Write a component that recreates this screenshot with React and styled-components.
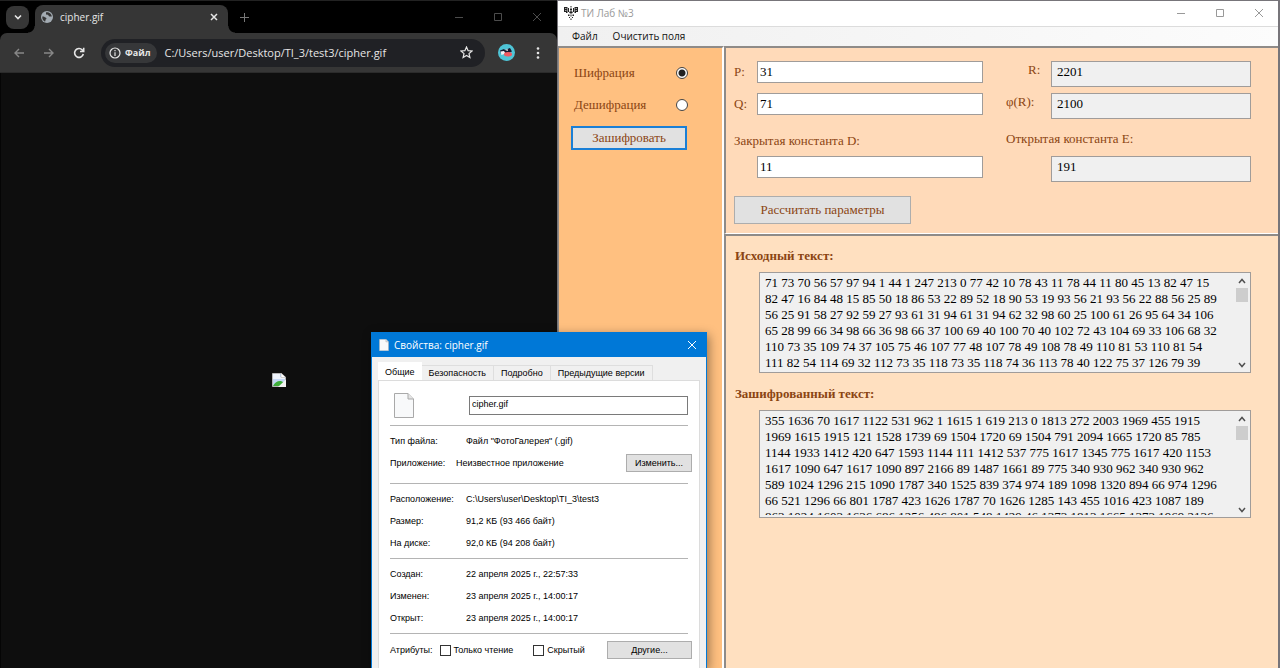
import React from "react";
import styled, { createGlobalStyle, css } from "styled-components";

const serif = `"Liberation Serif", "Times New Roman", serif`;
const sans = `"Liberation Sans", Arial, sans-serif`;
const ui = `"Open Sans", "Noto Sans", sans-serif`;

const GlobalStyle = createGlobalStyle`
  *, *::before, *::after { box-sizing: border-box; }
  body { margin: 0; background: #000; overflow: hidden; }
  button, input, textarea { margin: 0; font: inherit; color: inherit; }
`;

const Desktop = styled.div`
  position: relative;
  display: grid;
  grid-template-columns: 557fr 723fr;
  min-height: 100vh;
  overflow: hidden;
`;

/* ---------- browser ---------- */

const Browser = styled.section`
  display: flex;
  flex-direction: column;
  min-width: 0;
  background: #000;
  border-top: 1px solid #222;
  font-family: ${ui};
  color: #e6e6e6;
`;

const TabStrip = styled.div`
  display: flex;
  align-items: center;
  height: 32px;
  padding-left: 6px;
`;

const TabSearch = styled.button`
  display: grid;
  place-items: center;
  width: 23px;
  height: 23px;
  padding: 0;
  border: 0;
  border-radius: 8px;
  background: #363636;
`;

const BrowserTab = styled.div`
  position: relative;
  display: flex;
  align-items: center;
  align-self: flex-end;
  width: 193px;
  height: 28px;
  margin-left: 6px;
  padding: 0 8px 4px 6px;
  gap: 7px;
  border-radius: 8px 8px 0 0;
  background: #363636;
  font-size: 10px;
  span { flex: 1; }
  &::before, &::after {
    content: "";
    position: absolute;
    bottom: 0;
    width: 7px;
    height: 7px;
  }
  &::before {
    left: -7px;
    background: radial-gradient(circle at 0 0, transparent 6px, #363636 7px);
  }
  &::after {
    right: -7px;
    background: radial-gradient(circle at 100% 0, transparent 6px, #363636 7px);
  }
`;

const IconButton = styled.button`
  display: grid;
  place-items: center;
  width: ${(p) => p.$size || 14}px;
  height: ${(p) => p.$size || 14}px;
  padding: 0;
  border: 0;
  background: none;
  flex: none;
`;

const WindowButtons = styled.div`
  display: flex;
  gap: 24px;
  margin-left: auto;
  padding-right: ${(p) => p.$end}px;
  color: ${(p) => p.$tone};
`;

const Toolbar = styled.div`
  display: flex;
  align-items: center;
  height: 40px;
  padding: 0 12px;
  gap: 16px;
  background: #363636;
  border-radius: 7px 7px 0 0;
  border-bottom: 1px solid #2b2b2b;
`;

const Omnibox = styled.div`
  display: flex;
  align-items: center;
  flex: 1;
  min-width: 0;
  height: 28px;
  margin: 0 -3px 0 -1px;
  padding: 0 12px 0 4px;
  gap: 7px;
  border-radius: 14px;
  background: #202125;
  font-size: 11px;
`;

const SchemeChip = styled.button`
  display: flex;
  align-items: center;
  height: 20px;
  padding: 0 7px 0 4px;
  gap: 4px;
  border: 0;
  border-radius: 10px;
  background: #363739;
  font-size: 9px;
  font-weight: 700;
`;

const Address = styled.input`
  flex: 1;
  min-width: 0;
  padding: 0;
  border: 0;
  outline: 0;
  background: none;
`;

const Viewport = styled.div`
  display: grid;
  place-items: center;
  flex: 1;
  background: #0e0e0e;
  border-left: 1px solid #050505;
  svg { margin-top: 18px; }
`;

/* ---------- cipher application ---------- */

const AppWindow = styled.section`
  display: flex;
  flex-direction: column;
  min-width: 0;
  border: 1px solid #77757a;
  border-right-width: 2px;
  border-bottom: 0;
  background: #fff;
  font-family: ${serif};
  font-size: 13px;
  color: #8b4513;
`;

const TitleBar = styled.header`
  display: flex;
  align-items: center;
  height: 25px;
  padding: 0 0 1px 6px;
  gap: 3px;
  font-family: ${ui};
  font-size: 10px;
  color: #999;
`;

const MenuBar = styled.nav`
  display: flex;
  height: 20px;
  padding-left: 14px;
  gap: 15px;
  border-top: 1px solid #dcdcdc;
  background: linear-gradient(90deg, #f0f0f0, #fcfcfc);
  font-family: ${ui};
  font-size: 10px;
  color: #111;
`;

const MenuItem = styled.button`
  padding: 0 0 2px;
  border: 0;
  background: none;
  line-height: 16px;
`;

const Workspace = styled.div`
  display: grid;
  grid-template-columns: 166px 1fr;
  flex: 1;
`;

const sunken = css`
  border-style: solid;
  border-width: 2px 2px 2px 1px;
  border-color: #8f8b88 #fff #fff #8f8b88;
`;

const ModePanel = styled.form`
  ${sunken}
  border-bottom-width: 0;
  padding: 15px 35px 0 12px;
  background: #ffc080;
`;

const ModeOption = styled.label`
  display: flex;
  align-items: center;
  justify-content: space-between;
  height: 20px;
  margin-bottom: 12px;
  padding: 0 0 0 3px;
  &:last-of-type { margin-bottom: 11px; }
`;

const Radio = styled.input`
  appearance: none;
  width: 12px;
  height: 12px;
  margin: 0 -1px 0 0;
  border: 1px solid #444;
  border-radius: 50%;
  background: #fff;
  &:checked { background: radial-gradient(circle, #222 3px, #fff 4px); }
`;

const ActionButton = styled.button`
  width: ${(p) => p.$width || "100%"};
  height: ${(p) => (p.$primary ? 24 : 28)}px;
  padding: 0;
  border: ${(p) => (p.$primary ? "2px solid #1a7fd6" : "1px solid #adadad")};
  background: #e1e1e1;
`;

const RightSide = styled.div`
  display: flex;
  flex-direction: column;
  min-width: 0;
`;

const ParamsPanel = styled.form`
  ${sunken}
  border-left-width: 2px;
  border-right-width: 0;
  border-bottom-width: 1px;
  display: grid;
  grid-template-columns: 249fr 245fr;
  column-gap: 23px;
  padding: 13px 27px 9px 8px;
  background: #ffdab9;
`;

const ParamGroup = styled.div`
  display: grid;
  grid-template-columns: ${(p) => p.$label}px 1fr;
  grid-template-rows: 32px 32px 31px 40px;
  align-items: start;
  line-height: ${(p) => p.$line}px;
`;

const ParamLabel = styled.label`
  padding-left: ${(p) => p.$indent || 0}px;
`;

const ConstantLabel = styled.label`
  grid-column: 1 / -1;
  padding-top: 5px;
`;

const Field = styled.input`
  grid-column: 2;
  width: 100%;
  height: ${(p) => (p.readOnly ? 26 : 22)}px;
  padding: ${(p) => (p.readOnly ? "0 5px 5px" : "0 2px 1px")};
  border: 1px solid #a09c9a;
  border-radius: 0;
  background: ${(p) => (p.readOnly ? "#f0f0f0" : "#fff")};
  color: #000;
`;

const TextPanel = styled.div`
  ${sunken}
  border-left-width: 2px;
  border-right-width: 0;
  border-bottom-width: 0;
  flex: 1;
  padding: 10px 27px 0 9px;
  background: #ffe0c0;
`;

const TextHeading = styled.label`
  display: block;
  height: 20px;
  line-height: 20px;
  margin-bottom: 6px;
  font-weight: 700;
`;

const TextFrame = styled.div`
  display: flex;
  height: ${(p) => p.$height}px;
  margin: 0 0 11px 24px;
  border: 1px solid #a09c9a;
  background: #f0f0f0;
`;

const Output = styled.textarea`
  flex: 1;
  min-width: 0;
  margin: 2px 0;
  padding: 0 0 0 5px;
  border: 0;
  outline: 0;
  resize: none;
  overflow: hidden;
  white-space: pre;
  background: none;
  line-height: 16px;
  color: #000;
`;

const ScrollTrack = styled.div`
  display: grid;
  grid-template-rows: 15px 14px 1fr 15px;
  place-items: center;
  width: 15px;
  padding-right: 1px;
  > :last-child { grid-row: 4; }
`;

const ScrollThumb = styled.div`
  width: 12px;
  height: 14px;
  background: #cdcdcd;
`;

/* ---------- properties dialog ---------- */

const Dialog = styled.section`
  position: absolute;
  left: 371px;
  top: 332px;
  bottom: 0;
  display: flex;
  flex-direction: column;
  width: 336px;
  border: 1px solid #0078d7;
  border-bottom: 0;
  background: #f0f0f0;
  box-shadow: 2px 3px 10px rgba(0, 0, 0, 0.4);
  font-family: ${sans};
  font-size: 9px;
  color: #000;
`;

const DialogTitle = styled.header`
  display: flex;
  align-items: center;
  flex: none;
  height: 24px;
  padding: 0 8px 0 7px;
  gap: 5px;
  background: #0078d7;
  font-family: ${ui};
  font-size: 10px;
  color: #fff;
  span { flex: 1; }
`;

const DialogTabs = styled.div`
  display: flex;
  align-items: flex-end;
  height: 23px;
  padding: 0 6px;
`;

const DialogTab = styled.button`
  height: ${(p) => (p.$active ? 18 : 15)}px;
  padding: 0 ${(p) => (p.$active ? 6 : 7)}px;
  border: 1px solid ${(p) => (p.$active ? "#fff" : "#dedede")};
  border-bottom: 0;
  border-left-width: ${(p) => (p.$active ? 1 : 0)}px;
  background: ${(p) => (p.$active ? "#fff" : "#f0f0f0")};
`;

const DialogPage = styled.form`
  flex: 1;
  margin: 0 6px;
  padding: 11px 11px 0;
  border: 1px solid #dcdcdc;
  border-bottom: 0;
  background: #fff;
`;

const FileHead = styled.div`
  display: flex;
  align-items: center;
  justify-content: space-between;
  height: 33px;
  padding: 0 0 6px 4px;
`;

const FileName = styled.input`
  width: 219px;
  height: 19px;
  padding: 0 2px 3px;
  border: 1px solid #7a7a7a;
  border-radius: 0;
`;

const Section = styled.dl`
  margin: 0;
  padding: 4px 0 ${(p) => p.$end || 4}px;
  border-top: 1px solid #b4b4b4;
`;

const PropertyRow = styled.div`
  display: grid;
  grid-template-columns: ${(p) => p.$label || 76}px 1fr auto;
  align-items: center;
  height: 22px;
  margin-right: -4px;
  dt, dd { margin: 0; white-space: nowrap; }
`;

const SmallButton = styled.button`
  width: ${(p) => p.$width}px;
  height: 18px;
  padding: 0;
  border: 1px solid #adadad;
  background: #e1e1e1;
`;

const AttributesSection = styled.div`
  border-top: 1px solid #b4b4b4;
`;

const Attributes = styled.div`
  display: flex;
  align-items: center;
  height: 32px;
  margin-right: -4px;
  gap: 7px;
  button { margin-left: auto; }
`;

const CheckLabel = styled.label`
  display: flex;
  align-items: center;
  gap: 3px;
  margin-right: 13px;
`;

const Check = styled.input`
  appearance: none;
  width: 11px;
  height: 11px;
  border: 1px solid #333;
  background: #fff;
`;

/* ---------- drawings ---------- */

const Stroke = ({ d, size = 10, width = 1, box = size, ...rest }) => (
  <svg width={size} height={size} viewBox={`0 0 ${box} ${box}`} fill="none" stroke="currentColor" strokeWidth={width} aria-hidden="true" {...rest}>
    <path d={d} />
  </svg>
);

const CaptionButtons = ({ tone, end }) => (
  <WindowButtons $tone={tone} $end={end}>
    <IconButton $size={15} aria-label="Свернуть"><Stroke d="M1 5.5H9" /></IconButton>
    <IconButton $size={15} aria-label="Развернуть"><Stroke d="M1.5 1.5H8.500V8.500H1.500Z" /></IconButton>
    <IconButton $size={15} aria-label="Закрыть"><Stroke d="M1 1L9 9M9 1L1 9" /></IconButton>
  </WindowButtons>
);

const Globe = () => (
  <svg width="12" height="12" viewBox="0 0 12 12" aria-hidden="true">
    <circle cx="6" cy="6" r="6" fill="#a3abb2" />
    <path d="M1.300 5.500C3 5.500 3.500 6 4.500 6.500C6 7.200 5.500 8.200 4.600 8.600C4.600 9.500 4.300 10.200 4 10.700C2.200 9.800 1 8 1.300 5.500ZM5 1.300C5.200 2.700 4.700 3 5.300 3.600C6.200 4 7.400 3.600 7.600 4.700C7.800 5.800 9.500 5.400 10.800 5.600C10.700 3.300 8.400 1 5 1.300Z" fill="#363636" />
  </svg>
);

const Avatar = () => (
  <svg width="17" height="17" viewBox="0 0 17 17" aria-hidden="true">
    <circle cx="8.500" cy="8.500" r="8.500" fill="#4fc4d6" />
    <path d="M2 6.500L6 5L7 6L12 4L14 7.500L9 9.500L3 10Z" fill="#171a30" />
    <path d="M2.500 7.500L6 7L7.500 9.500L3.500 11Z" fill="#f3f3f6" />
    <path d="M7 6L9.500 5L10 7Z" fill="#fff" />
    <ellipse cx="10" cy="10.200" rx="4" ry="2.200" fill="#ef5b62" />
  </svg>
);

const BrokenImage = () => (
  <svg width="14" height="14" viewBox="0 0 14 14" role="img" aria-label="cipher.gif">
    <path d="M0.500 0.500H9L13.500 4.500V13.500H0.500Z" fill="#c4d7f5" stroke="#b5b5b5" />
    <path d="M1 1H8V4H13V6H1Z" fill="#eef3fb" />
    <path d="M9 0L14 4.500H9Z" fill="#fff" stroke="#aaa" strokeWidth=".5" />
    <path d="M1 13C3 9 6 7.500 9 8L13 10V13Z" fill="#3fae3a" />
    <path d="M6 14L14 6.500V14Z" fill="#f3f3f3" />
  </svg>
);

const AppEmblem = () => (
  <svg width="14" height="14" viewBox="0 0 14 14" aria-hidden="true" fill="#222">
    <path d="M0 1H3.500V7H2V6H0ZM4 2H5V6H4ZM9 2H10V6H9ZM10.500 1H14V6H12V7H10.500Z" />
    <path d="M6.500 0H7.500V1.500H6.500ZM6 2.500H8V4.500H6ZM5 6L7 5L9 6L8 7.500H6ZM4 8.500H5.500V10H4ZM8.500 8.500H10V10H8.500ZM6.500 8.500H7.500V10.500H6.500ZM5 11H6V12H5ZM8 11H9V12H8ZM6.500 12.500H7.500V14H6.500Z" />
    <path d="M1 2.500H2.500M1 4.500H2.500M11.500 2.500H13M11.500 4.500H13" stroke="#fff" strokeWidth=".6" />
  </svg>
);

const Page = ({ w, h }) => (
  <svg width={w} height={h} viewBox="0 0 20 25" aria-hidden="true">
    <path d="M0.500 0.500H14L19.500 6V24.500H0.500Z" fill="#f8f9fa" stroke="#a9a9a9" />
    <path d="M14 0.500V6H19.500" fill="#e4e4e4" stroke="#a9a9a9" />
  </svg>
);

/* ---------- content ---------- */

const sourceText = `71 73 70 56 57 97 94 1 44 1 247 213 0 77 42 10 78 43 11 78 44 11 80 45 13 82 47 15
82 47 16 84 48 15 85 50 18 86 53 22 89 52 18 90 53 19 93 56 21 93 56 22 88 56 25 89
56 25 91 58 27 92 59 27 93 61 31 94 61 31 94 62 32 98 60 25 100 61 26 95 64 34 106
65 28 99 66 34 98 66 36 98 66 37 100 69 40 100 70 40 102 72 43 104 69 33 106 68 32
110 73 35 109 74 37 105 75 46 107 77 48 107 78 49 108 78 49 110 81 53 110 81 54
111 82 54 114 69 32 112 73 35 118 73 35 118 74 36 113 78 40 122 75 37 126 79 39`;

const cipherText = `355 1636 70 1617 1122 531 962 1 1615 1 619 213 0 1813 272 2003 1969 455 1915
1969 1615 1915 121 1528 1739 69 1504 1720 69 1504 791 2094 1665 1720 85 785
1144 1933 1412 420 647 1593 1144 111 1412 537 775 1617 1345 775 1617 420 1153
1617 1090 647 1617 1090 897 2166 89 1487 1661 89 775 340 930 962 340 930 962
589 1024 1296 215 1090 1787 340 1525 839 374 974 189 1098 1320 894 66 974 1296
66 521 1296 66 801 1787 423 1626 1787 70 1626 1285 143 455 1016 423 1087 189
863 1024 1603 1636 686 1256 486 801 548 1429 46 1373 1813 1665 1373 1969 2136`;

const OutputBox = ({ id, title, text, height }) => (
  <>
    <TextHeading htmlFor={id}>{title}</TextHeading>
    <TextFrame $height={height}>
      <Output id={id} readOnly wrap="off" value={text} />
      <ScrollTrack>
        <Stroke size={8} width={1.5} d="M1 6L4 2.500L7 6" color="#505050" />
        <ScrollThumb />
        <Stroke size={8} width={1.5} d="M1 2L4 5.500L7 2" color="#505050" />
      </ScrollTrack>
    </TextFrame>
  </>
);

const Property = ({ name, value, label, children }) => (
  <PropertyRow $label={label}>
    <dt>{name}</dt>
    <dd>{value}</dd>
    {children && <dd>{children}</dd>}
  </PropertyRow>
);

export default function App() {
  return (
    <Desktop>
      <GlobalStyle />
      <Browser>
        <TabStrip>
          <TabSearch aria-label="Поиск вкладок"><Stroke size={8} width={1.6} d="M1 2.500L4 5.500L7 2.500" /></TabSearch>
          <BrowserTab>
            <Globe />
            <span>cipher.gif</span>
            <IconButton $size={12} aria-label="Закрыть вкладку"><Stroke size={8} width={1.5} d="M1 1L7 7M7 1L1 7" /></IconButton>
          </BrowserTab>
          <IconButton $size={32} aria-label="Новая вкладка"><Stroke size={9} width={1} d="M4.500 0V9M0 4.500H9" color="#777" /></IconButton>
          <CaptionButtons tone="#4c4c4c" end={13} />
        </TabStrip>
        <Toolbar>
          <IconButton aria-label="Назад"><Stroke size={10} width={1.400} d="M10 5H1M5 1L1 5L5 9" color="#888" /></IconButton>
          <IconButton aria-label="Вперёд"><Stroke size={10} width={1.400} d="M0 5H9M5 1L9 5L5 9" color="#888" /></IconButton>
          <IconButton aria-label="Обновить"><Stroke size={12} width={1.600} d="M10.300 7A4.400 4.400 0 1 1 9.300 3L10.500 4.300M10.700 0.800V4.500H7" /></IconButton>
          <Omnibox>
            <SchemeChip>
              <svg width="12" height="12" viewBox="0 0 12 12" fill="none" stroke="currentColor" strokeWidth="1.200" aria-hidden="true">
                <circle cx="6" cy="6" r="5" />
                <path d="M6 5.300V9M6 3V4.300" />
              </svg>
              Файл
            </SchemeChip>
            <Address aria-label="Адрес" defaultValue="C:/Users/user/Desktop/TI_3/test3/cipher.gif" />
            <IconButton aria-label="В закладки"><Stroke size={13} width={1.200} d="M6.500 1L8.100 4.700L12 5L9 7.600L9.900 11.500L6.500 9.400L3.100 11.500L4 7.600L1 5L4.900 4.700Z" /></IconButton>
          </Omnibox>
          <IconButton $size={17} aria-label="Профиль"><Avatar /></IconButton>
          <IconButton aria-label="Меню">
            <svg width="4" height="12" viewBox="0 0 4 12" fill="currentColor" aria-hidden="true">
              <circle cx="2" cy="1.500" r="1.300" /><circle cx="2" cy="6" r="1.300" /><circle cx="2" cy="10.500" r="1.300" />
            </svg>
          </IconButton>
        </Toolbar>
        <Viewport><BrokenImage /></Viewport>
      </Browser>

      <AppWindow>
        <TitleBar>
          <AppEmblem />
          ТИ Лаб №3
          <CaptionButtons tone="#999" end={12} />
        </TitleBar>
        <MenuBar>
          <MenuItem>Файл</MenuItem>
          <MenuItem>Очистить поля</MenuItem>
        </MenuBar>
        <Workspace>
          <ModePanel>
            <ModeOption>Шифрация<Radio type="radio" name="mode" defaultChecked /></ModeOption>
            <ModeOption>Дешифрация<Radio type="radio" name="mode" /></ModeOption>
            <ActionButton type="button" $primary>Зашифровать</ActionButton>
          </ModePanel>
          <RightSide>
            <ParamsPanel>
              <ParamGroup $label={23} $line={22}>
                <ParamLabel htmlFor="p">P:</ParamLabel>
                <Field id="p" defaultValue="31" />
                <ParamLabel htmlFor="q">Q:</ParamLabel>
                <Field id="q" defaultValue="71" />
                <ConstantLabel htmlFor="d">Закрытая константа D:</ConstantLabel>
                <Field id="d" defaultValue="11" />
              </ParamGroup>
              <ParamGroup $label={45} $line={18}>
                <ParamLabel htmlFor="r" $indent={22}>R:</ParamLabel>
                <Field id="r" readOnly value="2201" />
                <ParamLabel htmlFor="phi">φ(R):</ParamLabel>
                <Field id="phi" readOnly value="2100" />
                <ConstantLabel htmlFor="e">Открытая константа E:</ConstantLabel>
                <Field id="e" readOnly value="191" />
              </ParamGroup>
              <ActionButton type="button" $width="177px">Рассчитать параметры</ActionButton>
            </ParamsPanel>
            <TextPanel>
              <OutputBox id="source" title="Исходный текст:" text={sourceText} height={101} />
              <OutputBox id="cipher" title="Зашифрованный текст:" text={cipherText} height={108} />
            </TextPanel>
          </RightSide>
        </Workspace>
      </AppWindow>

      <Dialog role="dialog" aria-label="Свойства: cipher.gif">
        <DialogTitle>
          <Page w={10} h={12} />
          <span>Свойства: cipher.gif</span>
          <IconButton $size={12} aria-label="Закрыть"><Stroke d="M1 1L9 9M9 1L1 9" /></IconButton>
        </DialogTitle>
        <DialogTabs>
          <DialogTab $active>Общие</DialogTab>
          <DialogTab>Безопасность</DialogTab>
          <DialogTab>Подробно</DialogTab>
          <DialogTab>Предыдущие версии</DialogTab>
        </DialogTabs>
        <DialogPage>
          <FileHead>
            <Page w={20} h={25} />
            <FileName aria-label="Имя файла" defaultValue="cipher.gif" />
          </FileHead>
          <Section $end={9}>
            <Property name="Тип файла:" value={'Файл "ФотоГалерея" (.gif)'} />
            <Property name="Приложение:" value="Неизвестное приложение" label={66}>
              <SmallButton type="button" $width={66}>Изменить...</SmallButton>
            </Property>
          </Section>
          <Section>
            <Property name="Расположение:" value="C:\Users\user\Desktop\TI_3\test3" />
            <Property name="Размер:" value="91,2 КБ (93 466 байт)" />
            <Property name="На диске:" value="92,0 КБ (94 208 байт)" />
          </Section>
          <Section>
            <Property name="Создан:" value="22 апреля 2025 г., 22:57:33" />
            <Property name="Изменен:" value="23 апреля 2025 г., 14:00:17" />
            <Property name="Открыт:" value="23 апреля 2025 г., 14:00:17" />
          </Section>
          <AttributesSection>
            <Attributes>
              Атрибуты:
              <CheckLabel><Check type="checkbox" />Только чтение</CheckLabel>
              <CheckLabel><Check type="checkbox" />Скрытый</CheckLabel>
              <SmallButton type="button" $width={85}>Другие...</SmallButton>
            </Attributes>
          </AttributesSection>
        </DialogPage>
      </Dialog>
    </Desktop>
  );
}
